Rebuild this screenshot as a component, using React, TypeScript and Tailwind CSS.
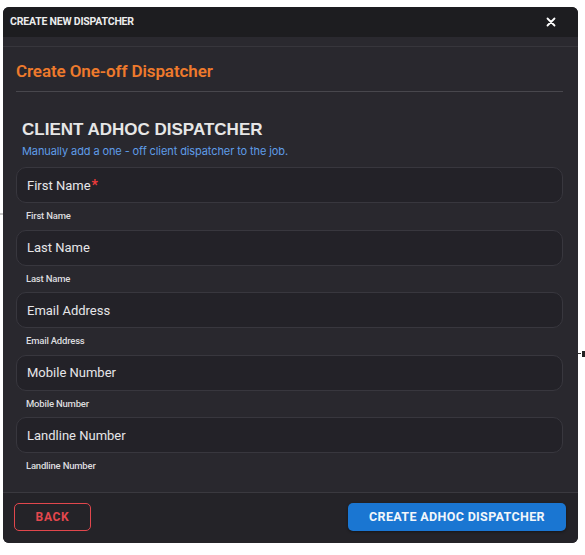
import React from 'react';

const fields = [
  { label: 'First Name', required: true },
  { label: 'Last Name' },
  { label: 'Email Address' },
  { label: 'Mobile Number' },
  { label: 'Landline Number' },
];

const Field: React.FC<{ label: string; required?: boolean }> = ({ label, required }) => (
  <div>
    <div className="h-[36px] rounded-[10px] border border-[#38373e] bg-[#232228] flex items-center pl-[10px] pt-[1px]">
      <span className="text-[13px] text-[#e6e6e8]">{label}</span>
      {required && <span className="text-[14px] font-bold text-[#ef3b3b] ml-[1px]">*</span>}
    </div>
    <div className="mt-[7px] mb-[7.5px] pl-[10px] h-[12px] leading-[12px] text-[9.5px] font-medium text-[#dcdcdf] tracking-[-0.2px]">
      {label}
    </div>
  </div>
);

const App: React.FC = () => {
  return (
    <div className="relative w-[585px] h-[555px] bg-white" style={{ fontFamily: 'Roboto, "Liberation Sans", sans-serif' }}>
      {/* bits of the page behind the modal */}
      <div className="absolute left-0 top-[213px] w-[3px] h-[2px] bg-[#c8c8c8]" />
      <div className="absolute left-[578px] top-[353px] w-[3px] h-[1px] bg-[#333]" />
      <div className="absolute left-[582px] top-[351px] w-[3px] h-[6px] bg-[#222]" />

      <div className="absolute left-[3px] top-[7px] w-[575px] h-[536px] rounded-[6px] bg-[#29282e] flex flex-col overflow-hidden">
        {/* title bar */}
        <div className="h-[30px] bg-[#1d1d20] flex items-center justify-between pl-[7px] pr-[22px]">
          <span className="text-[10.5px] font-bold text-[#ececec] tracking-[-0.2px]">CREATE NEW DISPATCHER</span>
          <svg width="10" height="10" viewBox="0 0 10 10" className="text-white">
            <path d="M1.5 1.5L8.5 8.5M8.5 1.5L1.5 8.5" stroke="currentColor" strokeWidth="1.8" strokeLinecap="round" />
          </svg>
        </div>
        <div className="h-[10px] border-b border-[#37363c] bg-[#2a292f]" />

        {/* body */}
        <div className="flex-1 pl-[13px] pr-[15px] pt-[12px]">
          <h2 className="text-[17px] leading-[24px] font-semibold text-[#ee7a2c] tracking-[-0.1px]">Create One-off Dispatcher</h2>
          <div className="mt-[8px] h-px bg-[#48474d]" />

          <div className="mt-[29px] pl-[6px]">
            <h3
              className="text-[17px] leading-[18px] font-bold text-[#e6e6e6]"
              style={{ fontFamily: '"Liberation Sans", Arial, sans-serif' }}
            >
              CLIENT ADHOC DISPATCHER
            </h3>
            <p className="mt-[4px] text-[11px] leading-[16px] text-[#5f9ce8] tracking-[-0.1px]" style={{ fontFamily: 'Inter, Roboto, sans-serif' }}>
              Manually add a one - off client dispatcher to the job.
            </p>
          </div>

          <div className="mt-[8px]">
            {fields.map((f) => (
              <Field key={f.label} label={f.label} required={f.required} />
            ))}
          </div>
        </div>

        {/* actions */}
        <div className="border-t border-[#3a393f] bg-[#242328] pl-[11px] pr-[12px] pt-[10px] pb-[12px] flex items-center justify-between">
          <button className="w-[77px] h-[28px] rounded-[5px] border border-[#e2474d] text-[#e5474d] text-[12px] font-bold tracking-[0.7px]">
            BACK
          </button>
          <button className="w-[218px] h-[28px] rounded-[5px] bg-[#1a76d2] text-[#f2f6fb] text-[12.5px] font-bold tracking-[0.35px] shadow-[0_1px_3px_rgba(0,0,0,0.4)]">
            CREATE ADHOC DISPATCHER
          </button>
        </div>
      </div>
    </div>
  );
};

export default App;
